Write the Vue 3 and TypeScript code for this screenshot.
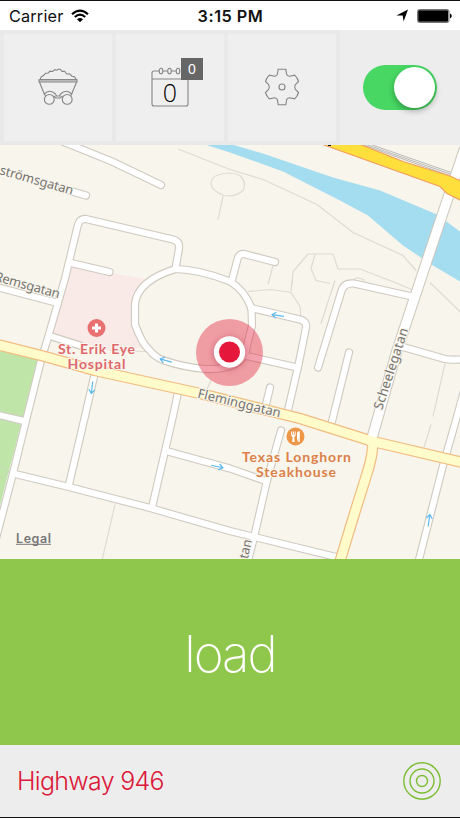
<template>
  <div class="screen">
    <header class="status-bar">
      <div class="carrier">
        <span class="carrier-name">Carrier</span>
        <svg class="wifi" viewBox="0 0 18 14">
          <path d="M1 5.2 Q9 -1.8 17 5.2" />
          <path d="M3.8 8 Q9 3.4 14.2 8" />
          <path class="solid" d="M6 10.2 Q9 7.6 12 10.2 L9 13.3 Z" />
        </svg>
      </div>
      <span class="clock">3:15 PM</span>
      <div class="indicators">
        <svg class="location" viewBox="0 0 12 13"><path d="M12 .5 L7.6 12.5 L6.7 6.4 L.4 6.5 Z" /></svg>
        <svg class="battery" viewBox="0 0 35 14">
          <rect class="battery-case" x=".5" y=".5" width="31.5" height="13" rx="1.8" />
          <rect x="1.2" y="1.2" width="30" height="11.6" rx="1" />
          <path d="M33 4.6 Q34.8 5.6 34.8 7 Q34.8 8.4 33 9.4 Z" />
        </svg>
      </div>
    </header>

    <nav class="toolbar">
      <button class="tile">
        <svg class="cart" viewBox="0 0 40 38">
          <path d="M2.2 11.5 L3 9 L5.8 7.2 L7.7 5.2 L10 5.2 L12 3.2 L14.6 3.5 L16.8 1.6 L18.9 2.2 L20.5 1 L22.5 1.5 L24 3.4 L26.5 3.2 L28.7 6 L31.5 5.8 L34 8.2 L36.6 9 L38.3 11.5 Z" />
          <path class="rim" d="M1 11.8 H39 V14 H1 Z" />
          <path d="M1.5 14.3 L6.300 26 Q11.500 20.500 17.500 26 L18.500 28 M38.5 14.3 L33.700 26 Q28.500 20.500 22.500 26 L21.500 28 M17.500 28 H22.500" />
          <path d="M6.300 26 L7.500 28 M33.700 26 L32.500 28 M15.500 28 L18 30 H22 L24.500 28" />
          <circle cx="11.300" cy="31.4" r="4.9" />
          <circle cx="29.200" cy="31.4" r="4.9" />
        </svg>
      </button>
      <button class="tile">
        <span class="calendar">
          <svg viewBox="0 0 38 40">
            <path d="M8 4 H3 Q1 4 1 6 V37 Q1 39 3 39 H35 Q37 39 37 37 V6 Q37 4 35 4 H30 M12 4 H16.5 M20.5 4 H25 M1 12 H37" />
            <ellipse cx="10" cy="4" rx="1.8" ry="2.8" />
            <ellipse cx="18.5" cy="4" rx="1.8" ry="2.8" />
            <ellipse cx="27" cy="4" rx="1.8" ry="2.8" />
          </svg>
          <span class="calendar-count">{{ loadsToday }}</span>
          <span class="badge">{{ pendingLoads }}</span>
        </span>
      </button>
      <button class="tile">
        <svg class="gear" viewBox="0 0 36 38">
          <path d="M14.2 1.3 H21.8 L22.6 6.2 Q23 8 25.4 8.3 L30.7 7.2 Q33.5 9.8 34.5 13.5 L31.4 16.5 Q30 19 31.4 21.5 L34.5 24.5 Q33.4 28.3 30.7 30.8 L25.4 29.7 Q23 30 22.6 31.8 L21.8 36.7 H14.2 L13.4 31.8 Q13 30 10.6 29.7 L5.3 30.8 Q2.5 28.2 1.5 24.5 L4.6 21.5 Q6 19 4.6 16.5 L1.5 13.5 Q2.6 9.7 5.3 7.2 L10.6 8.3 Q13 8 13.4 6.2 Z" />
          <circle cx="18" cy="19" r="3" />
        </svg>
      </button>
      <div class="toggle-cell">
        <button class="toggle" :class="{ on: isTracking }" @click="isTracking = !isTracking">
          <span class="knob"></span>
        </button>
      </div>
    </nav>

    <main class="map">
      <svg viewBox="0 144.5 460 414" preserveAspectRatio="none">
        <!-- areas -->
        <path class="water" d="M205 144 H232 L263 153 L333 177 L380 190 L437 214 L460 231 V281 L433 265 L403 245 L368 215 L340 200 L283 171 L230 152 Z" />
        <path class="hospital" d="M68 264 L110 272 L146 279 L134 302 V328 L142 347 L110 350 L50 335 Z" />
        <path class="park" d="M0 350 L39 359 L25 420 L0 414 Z M0 418 L21 424 L0 505 Z" />

        <path v-for="d in footpaths" :key="d" class="footpath" :d="d" />
        <path class="park-path" d="M0 466 L9 471 L0 479" />
        <path class="rail" d="M362 144 L452 176 M366 144 L453 174.500 M371 144 L454 173" />

        <!-- streets: every casing first, so that the crossings stay open -->
        <path v-for="d in streets" :key="'c' + d" class="street-casing" :d="d" />
        <path class="street-casing wide" :d="scheelegatan" />
        <path v-for="d in streets" :key="'f' + d" class="street" :d="d" />
        <path class="avenue-casing" :d="fleminggatan" />
        <path class="avenue-casing" :d="avenueSouth" />
        <path class="street wide" :d="scheelegatan" />
        <path class="avenue" :d="fleminggatan" />
        <path class="avenue" :d="avenueSouth" />
        <path class="highway" d="M320 143 L440 186 L447 193 L462 200.500 V181 L450 175.500 L403 161 L358 143 Z" />
        <path class="highway-mark" d="M328 144.500 H331 V145.500 H328 Z" />

        <g v-for="a in arrows" :key="a.x" :transform="`translate(${a.x} ${a.y}) rotate(${a.angle})`">
          <path class="arrow" d="M-6 0 H6 M2 -3 L6 0 L2 3" />
        </g>

        <text
          v-for="s in streetNames"
          :key="s.name"
          class="street-name"
          :transform="`translate(${s.x} ${s.y}) rotate(${s.angle})`"
          :textLength="s.length"
        >{{ s.name }}</text>

        <!-- places -->
        <circle class="pin-hospital" cx="96.500" cy="327.500" r="9" />
        <path class="pin-cross" d="M96.500 323 V332 M92 327.500 H101" />
        <text class="place red" x="58" y="353.500" textLength="77">St. Erik Eye</text>
        <text class="place red" x="67.500" y="368" textLength="58">Hospital</text>

        <circle class="pin-food" cx="295.500" cy="436" r="9" />
        <path class="pin-fork" d="M291.600 431 V434 M293.400 431 V434 M295.200 431 V434" />
        <path class="pin-cutlery" d="M291 434 H295.800 Q295.600 436 294.200 436.500 L294.600 441.500 H292.200 L292.600 436.500 Q291.200 436 291 434 Z M297 441.500 V432.500 Q297.300 431 299.800 430.500 V441.500 H298.300 V437.500 Z" />
        <text class="place orange" x="242" y="461.700" textLength="109">Texas Longhorn</text>
        <text class="place orange" x="256" y="476.200" textLength="80">Steakhouse</text>

        <!-- current position -->
        <circle class="position-range" cx="229.500" cy="352" r="33.500" />
        <circle class="position-ring" cx="229.500" cy="351.500" r="15.700" />
        <circle class="position-dot" cx="229.500" cy="351.500" r="10.500" />

        <text class="legal" x="16" y="542.300" textLength="35">Legal</text>
        <path class="legal-line" d="M16 543.800 H51" />
      </svg>
    </main>

    <button class="load-button">load</button>

    <footer class="footer">
      <span class="project">Highway 946</span>
      <svg class="target" viewBox="0 0 40 40">
        <circle cx="20" cy="20" r="18.200" />
        <circle cx="20" cy="20" r="12" />
        <circle cx="20" cy="20" r="5.500" />
      </svg>
    </footer>
  </div>
</template>

<script setup lang="ts">
import { ref } from 'vue'

interface StreetName {
  name: string
  x: number
  y: number
  angle: number
  length: number
}

interface Arrow {
  x: number
  y: number
  angle: number
}

const isTracking = ref(true)
const loadsToday = ref(0)
const pendingLoads = ref(0)

const fleminggatan = 'M-5 343.500 L43 355.500 L95 370 L200 393 L300 418 L373 441 L465 462.500'
const avenueSouth = 'M373 443 Q372 458 367 473 L352 521 L339 564'
const scheelegatan = 'M464 150 L441 218 L420 281 L397 350 L377 420 L371 441'

const streets: string[] = [
  'M60 140 L112 161 L161 184.500',
  'M62 188 L86 195',
  'M-4 538 L13 473 L26 420 L41 360 L48 337 L65 278 L78 224 Q80 218 86 218.500 L173 239 Q180 241 179 248 L175.500 268',
  'M71 262.500 L109.500 271.500',
  'M175.500 268.500 Q138 280 135 303 V324 Q142 343 148 348 Q155 357 164 360 Q185 367 205 368.500 Q245 370 247 345 L252 325 L251.500 308 Q245 290 230 281 Q200 269 175.500 268.500',
  'M251 307.500 L300 319 Q307 321 306 327 L299 362 L287 414',
  'M240 354 L297 367',
  'M270 387 L265 408',
  'M231.500 281 L238 257 Q240 253 244 253.500 L275 261.500',
  'M318 367 L341 292 Q343 282 354 283 L412 296',
  'M349 352 L330 429',
  'M403 346.500 L445 358.500 Q449 359.500 463 359',
  'M465 387 L455 423 L443 465 L418 563',
  'M-5 286 L56 302',
  'M50 335.500 L80 345',
  'M95 372 L84 420 L69 484',
  'M178 392 L172 420 L152 507',
  'M13 473 L69 486.500 L152 508 L230 530.500 L342 558',
  'M168 451 L230 468 L267 481',
  'M281 430 L267 480 L254 537 L247 564',
  'M-3 414 L24 420.500'
]

const footpaths: string[] = [
  'M178 148.500 L230 169 L263 179 L317 204 L353 232 L403 255 L416 270',
  'M217 175 Q228 170 240 175 Q247 182 243 190 Q235 197 224 195 Q211 190 211 183 Q212 176 217 175 Z',
  'M223 196 L218 219',
  'M292 284 L293 271 L308 253.500 L333 253.500 L338 268.500 L360 268.500 L395 282 L414 290',
  'M315 254 L311 268 L316 280 L330 283',
  'M273 265 L268 284',
  'M248 291 L271 289 L291 292 L300 306 L301 318',
  'M335 280 L321 323',
  'M352 282 Q355 274 365 280',
  'M292 280 L291 291',
  'M430 282 L462 313',
  'M445 363 L433 416',
  'M431 424 L424 447',
  'M115 504 L102 560',
  'M110 350 L145 351',
  'M211 380 L205 393'
]

const arrows: Arrow[] = [
  { x: 166, y: 360, angle: 195 },
  { x: 278, y: 315, angle: 188 },
  { x: 92, y: 387, angle: 96 },
  { x: 217, y: 466, angle: 12 },
  { x: 429, y: 520, angle: -82 }
]

const streetNames: StreetName[] = [
  { name: 'strömsgatan', x: -1, y: 173.5, angle: 16, length: 76 },
  { name: 'Remsgatan', x: -6, y: 280, angle: 15.5, length: 67 },
  { name: 'Fleminggatan', x: 197, y: 397, angle: 13.5, length: 85 },
  { name: 'Scheelegatan', x: 382, y: 410, angle: -72, length: 85 },
  { name: 'sgatan', x: 243, y: 579, angle: -77, length: 40 }
]
</script>

<style>
body {
  margin: 0;
}
</style>

<style scoped>
.screen {
  display: flex;
  flex-direction: column;
  width: 460px;
  height: 818px;
  box-sizing: border-box;
  border-top: 1px solid #111;
  border-bottom: 1px solid #111;
  overflow: hidden;
  background: #ededed;
  font-family: Inter, "Liberation Sans", sans-serif;
}

button {
  margin: 0;
  padding: 0;
  border: 0;
  font-family: inherit;
  cursor: pointer;
}

.status-bar {
  display: grid;
  grid-template-columns: 1fr auto 1fr;
  align-items: center;
  flex: 0 0 28.5px;
  box-sizing: border-box;
  padding: 1px 8px 0 9px;
  background: #fff;
  color: #111;
}

.carrier,
.indicators {
  display: flex;
  align-items: center;
}

.carrier-name {
  font-size: 16.3px;
  letter-spacing: 0.15px;
}

.wifi {
  width: 18px;
  height: 14px;
  margin-left: 8px;
}

.wifi path {
  fill: none;
  stroke: #000;
  stroke-width: 2.1;
}

.wifi .solid {
  fill: #000;
  stroke: none;
}

.clock {
  font-size: 16.3px;
  font-weight: 600;
  letter-spacing: 0.5px;
}

.indicators {
  justify-content: flex-end;
}

.location {
  width: 12px;
  height: 13px;
  margin-right: 9px;
}

.battery {
  width: 35px;
  height: 14px;
}

.battery-case {
  fill: none;
  stroke: #777;
}

.toolbar {
  display: flex;
  gap: 4px;
  flex: 0 0 115px;
  box-sizing: border-box;
  padding: 4px 0 4px 4px;
  background: #e9e9e9;
}

.tile {
  display: flex;
  align-items: center;
  justify-content: center;
  width: 108px;
  background: #efefef;
}

.tile svg {
  fill: none;
  stroke: #858585;
  stroke-width: 1.1;
}

.cart {
  width: 40px;
  height: 38px;
}

.cart .rim {
  fill: #ccc;
}

.gear {
  width: 36px;
  height: 38px;
}

.calendar {
  position: relative;
  display: flex;
  width: 38px;
  height: 40px;
}

.calendar-count {
  position: absolute;
  top: 10px;
  left: 0;
  width: 38px;
  font-family: "Open Sans", sans-serif;
  font-size: 25px;
  font-weight: 300;
  line-height: 31px;
  text-align: center;
  color: #000;
}

.badge {
  position: absolute;
  top: -9px;
  left: 30px;
  width: 22px;
  height: 22px;
  background: #666;
  color: #fff;
  font-family: "Liberation Sans", sans-serif;
  font-size: 14px;
  line-height: 22px;
  text-align: center;
}

.toggle-cell {
  display: flex;
  flex: 1;
  align-items: center;
  padding-left: 23px;
  margin: -4px 0;
  background: #ededed;
}

.toggle {
  display: flex;
  width: 74px;
  height: 45px;
  box-sizing: border-box;
  padding: 2px;
  border-radius: 23px;
  background: #ccc;
}

.toggle.on {
  justify-content: flex-end;
  background: #47d762;
}

.knob {
  width: 41px;
  height: 41px;
  border-radius: 50%;
  background: #fff;
  box-shadow: 0 3px 6px rgba(0, 0, 0, 0.3);
}

.map {
  flex: 0 0 414px;
  background: #f8f5ed;
}

.map svg {
  display: block;
  width: 100%;
  height: 100%;
}

.water {
  fill: #a4dcf0;
}

.hospital {
  fill: #f9e9e7;
}

.park {
  fill: #bfe6a8;
}

.park-path {
  fill: none;
  stroke: #c9d8b6;
}

.footpath {
  fill: none;
  stroke: #dedbd2;
  stroke-width: 1.2;
}

.rail {
  fill: none;
  stroke: #aaa;
  stroke-width: 0.8;
}

.street-casing,
.street,
.avenue-casing,
.avenue {
  fill: none;
  stroke-linecap: round;
  stroke-linejoin: round;
}

.street-casing {
  stroke: #cfcac1;
  stroke-width: 8.2;
}

.street {
  stroke: #fff;
  stroke-width: 6;
}

.street-casing.wide {
  stroke-width: 11.4;
}

.street.wide {
  stroke-width: 9.2;
}

.avenue-casing {
  stroke: #f2bd80;
  stroke-width: 11.4;
}

.avenue {
  stroke: #fffbcb;
  stroke-width: 9;
}

.highway {
  fill: #ffdf3b;
  stroke: #f3a05f;
  stroke-width: 1.2;
}

.highway-mark {
  fill: #111;
}

.arrow {
  fill: none;
  stroke: #5db9ec;
  stroke-width: 1.2;
}

.street-name {
  fill: #77746f;
  stroke: #f8f5ed;
  stroke-width: 2px;
  paint-order: stroke;
  font-family: "Noto Sans", sans-serif;
  font-size: 13px;
}

.place {
  stroke: #f8f5ed;
  stroke-width: 2px;
  paint-order: stroke;
  font-family: Lato, sans-serif;
  font-size: 14px;
  font-weight: 700;
}

.place.red {
  fill: #df686c;
}

.place.orange {
  fill: #db8149;
}

.pin-hospital {
  fill: #e96f70;
}

.pin-cross {
  stroke: #fff;
  stroke-width: 3;
}

.pin-food {
  fill: #ec9646;
}

.pin-cutlery {
  fill: #fff;
}

.pin-fork {
  stroke: #fff;
  stroke-width: 1;
}

.position-range {
  fill: #e4213f;
  fill-opacity: 0.42;
}

.position-ring {
  fill: #fff;
  filter: drop-shadow(0 1px 3px rgba(120, 0, 20, 0.35));
}

.position-dot {
  fill: #e5173a;
}

.legal {
  fill: #777;
  font-size: 12.5px;
  font-weight: 600;
}

.legal-line {
  stroke: #777;
}

.load-button {
  flex: 0 0 186px;
  padding-top: 3px;
  background: #8fc64c;
  color: #fff;
  font-size: 51px;
  font-weight: 200;
  letter-spacing: -2px;
}

.footer {
  display: flex;
  flex: 1;
  align-items: center;
  justify-content: space-between;
  padding: 0 18px 0 17px;
  background: #ededed;
}

.project {
  color: #dc1738;
  font-size: 25px;
  font-weight: 300;
  letter-spacing: -0.7px;
}

.target {
  width: 40px;
  height: 40px;
}

.target circle {
  fill: none;
  stroke: #7cbd32;
  stroke-width: 1.4;
}
</style>
